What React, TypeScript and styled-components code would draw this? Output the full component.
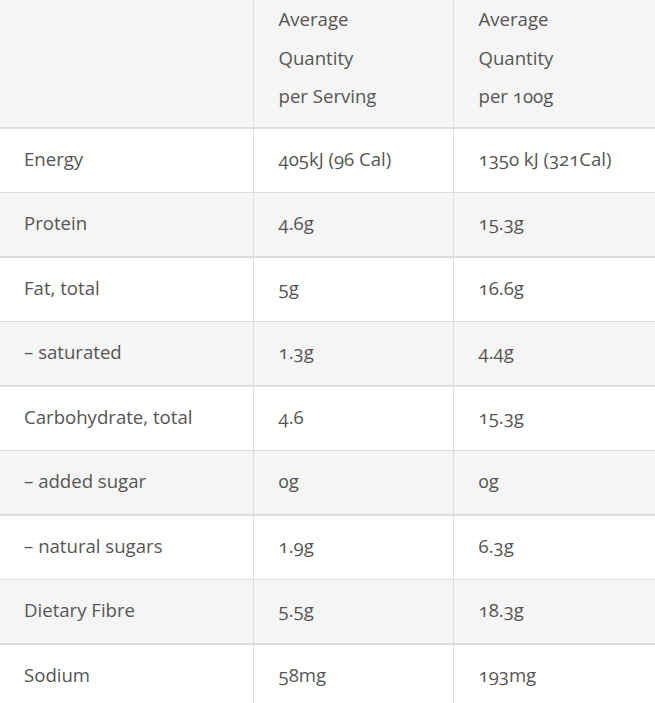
import React from 'react'
import { styled, createGlobalStyle } from 'styled-components'

const GlobalStyle = createGlobalStyle`
  html, body {
    margin: 0;
    padding: 0;
    background: #fff;
  }
`;

type Row = { label: string; serving: string; per100: string }

const rows: Row[] = [
    { label: 'Energy', serving: '405kJ (96 Cal)', per100: '1350 kJ (321Cal)' },
    { label: 'Protein', serving: '4.6g', per100: '15.3g' },
    { label: 'Fat, total', serving: '5g', per100: '16.6g' },
    { label: '– saturated', serving: '1.3g', per100: '4.4g' },
    { label: 'Carbohydrate, total', serving: '4.6', per100: '15.3g' },
    { label: '– added sugar', serving: '0g', per100: '0g' },
    { label: '– natural sugars', serving: '1.9g', per100: '6.3g' },
    { label: 'Dietary Fibre', serving: '5.5g', per100: '18.3g' },
    { label: 'Sodium', serving: '58mg', per100: '193mg' },
]

const App = () => {
  return (
    <>
      <GlobalStyle />
      <Table>
        <colgroup>
          <col style={{ width: 253 }} />
          <col style={{ width: 200 }} />
          <col />
        </colgroup>
        <thead>
          <tr>
            <HeadCell></HeadCell>
            <HeadCell>Average<br />Quantity<br />per Serving</HeadCell>
            <HeadCell>Average<br />Quantity<br />per 100g</HeadCell>
          </tr>
        </thead>
        <tbody>
          {rows.map((r, i) => (
            <BodyRow key={r.label} $shaded={i % 2 === 1}>
              <Cell>{r.label}</Cell>
              <Cell>{r.serving}</Cell>
              <Cell>{r.per100}</Cell>
            </BodyRow>
          ))}
        </tbody>
      </Table>
    </>
  )
}

const Table = styled.table`
    width: 655px;
    border-collapse: collapse;
    table-layout: fixed;
    font-family: "Open Sans", "Liberation Sans", sans-serif;
    font-size: 18.6px;
    color: #555;
    font-variant-numeric: oldstyle-nums;
    td + td, th + th {
        border-left: 1px solid #ddd;
    }
`;

const HeadCell = styled.th`
    background: #f5f5f5;
    text-align: left;
    font-weight: 400;
    line-height: 38.5px;
    padding: 0 24px 0 25px;
    height: 128px;
    box-sizing: border-box;
    vertical-align: top;
    border-bottom: 2px solid #ddd;
`;

const BodyRow = styled.tr<{ $shaded: boolean }>`
    background: ${p => p.$shaded ? '#f5f5f5' : '#fff'};
    border-bottom: ${p => p.$shaded ? '2px' : '1px'} solid #ddd;
`;

const Cell = styled.td`
    height: 64.5px;
    box-sizing: border-box;
    padding: 0 24px 3px;
    vertical-align: middle;
    line-height: 24px;
    &:not(:first-child) {
        padding-left: 25px;
    }
`;

export default App;
